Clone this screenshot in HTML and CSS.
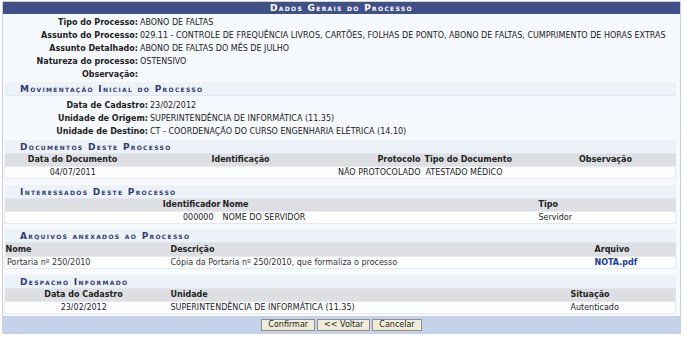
FILE: index.html
```html
<!DOCTYPE html>
<html lang="pt-BR">
<head>
  <meta charset="UTF-8">
  <title>Dados Gerais do Processo</title>
  <link rel="stylesheet" href="styles.css">
</head>
<body>
  <div class="painel">
    <div class="titulo">Dados Gerais do Processo</div>

    <table class="ficha ficha-geral">
      <tr><th>Tipo do Processo:</th><td>ABONO DE FALTAS</td></tr>
      <tr><th>Assunto do Processo:</th><td>029.11 - CONTROLE DE FREQUÊNCIA LIVROS, CARTÕES, FOLHAS DE PONTO, ABONO DE FALTAS, CUMPRIMENTO DE HORAS EXTRAS</td></tr>
      <tr><th>Assunto Detalhado:</th><td>ABONO DE FALTAS DO MÊS DE JULHO</td></tr>
      <tr><th>Natureza do processo:</th><td>OSTENSIVO</td></tr>
      <tr><th>Observação:</th><td></td></tr>
    </table>

    <div class="secao">Movimentação Inicial do Processo</div>
    <table class="ficha ficha-mov">
      <tr><th>Data de Cadastro:</th><td>23/02/2012</td></tr>
      <tr><th>Unidade de Origem:</th><td>SUPERINTENDÊNCIA DE INFORMÁTICA (11.35)</td></tr>
      <tr><th>Unidade de Destino:</th><td>CT - COORDENAÇÃO DO CURSO ENGENHARIA ELÉTRICA (14.10)</td></tr>
    </table>

    <div class="secao">Documentos Deste Processo</div>
    <table class="lista lista-docs">
      <colgroup>
        <col style="width:136px"><col style="width:188px"><col style="width:94px"><col style="width:113px"><col>
      </colgroup>
      <thead>
        <tr>
          <th class="centro">Data do Documento</th>
          <th class="centro">Identificação</th>
          <th class="direita">Protocolo</th>
          <th>Tipo do Documento</th>
          <th class="centro">Observação</th>
        </tr>
      </thead>
      <tbody>
        <tr>
          <td class="centro">04/07/2011</td>
          <td></td>
          <td class="direita">NÃO PROTOCOLADO</td>
          <td>ATESTADO MÉDICO</td>
          <td></td>
        </tr>
      </tbody>
    </table>

    <div class="secao">Interessados Deste Processo</div>
    <table class="lista lista-interessados">
      <colgroup>
        <col style="width:218px"><col style="width:314px"><col>
      </colgroup>
      <thead>
        <tr>
          <th class="direita">Identificador</th>
          <th>Nome</th>
          <th>Tipo</th>
        </tr>
      </thead>
      <tbody>
        <tr>
          <td class="direita recuo">000000</td>
          <td>NOME DO SERVIDOR</td>
          <td>Servidor</td>
        </tr>
      </tbody>
    </table>

    <div class="secao">Arquivos anexados ao Processo</div>
    <table class="lista lista-arquivos">
      <colgroup>
        <col style="width:164px"><col style="width:424px"><col>
      </colgroup>
      <thead>
        <tr>
          <th>Nome</th>
          <th>Descrição</th>
          <th>Arquivo</th>
        </tr>
      </thead>
      <tbody>
        <tr>
          <td>Portaria nº 250/2010</td>
          <td>Cópia da Portaria nº 250/2010, que formaliza o processo</td>
          <td><a href="#">NOTA.pdf</a></td>
        </tr>
      </tbody>
    </table>

    <div class="secao">Despacho Informado</div>
    <table class="lista lista-despacho">
      <colgroup>
        <col style="width:158px"><col style="width:404px"><col>
      </colgroup>
      <thead>
        <tr>
          <th class="centro">Data do Cadastro</th>
          <th>Unidade</th>
          <th>Situação</th>
        </tr>
      </thead>
      <tbody>
        <tr>
          <td class="centro">23/02/2012</td>
          <td>SUPERINTENDÊNCIA DE INFORMÁTICA (11.35)</td>
          <td>Autenticado</td>
        </tr>
      </tbody>
    </table>

    <div class="rodape">
      <button>Confirmar</button>
      <button>&lt;&lt; Voltar</button>
      <button>Cancelar</button>
    </div>
  </div>
</body>
</html>
```

FILE: styles.css
```css
:root {
  --azul-titulo: #415089;
  --azul-texto: #2f3b72;
  --fundo: #f6f9fe;
  --fundo-secao: #edf1f8;
  --cinza-cabecalho: #dedfe3;
  --rodape: #c6d1ea;
}
body {
  margin: 0;
  background: #fff;
  color: #222;
  font-family: "DejaVu Sans", Verdana, sans-serif;
  font-size: 8px;
}
.painel {
  width: 677px;
  margin: 1px 0 0 2px;
  border: 1px solid #c9d0de;
  background: var(--fundo);
}
.titulo {
  height: 12px;
  line-height: 12px;
  background: var(--azul-titulo);
  color: #fff;
  font-size: 9px;
  font-weight: bold;
  font-variant: small-caps;
  letter-spacing: 1.3px;
  text-align: center;
}
table {
  border-collapse: collapse;
  font-size: 8px;
}
.ficha {
  margin-top: 2px;
}
.ficha th {
  text-align: right;
  padding: 0 1px 0 0;
  line-height: 13px;
  height: 13px;
  white-space: nowrap;
}
.ficha td {
  padding: 0 0 0 1px;
  white-space: nowrap;
}
.ficha-geral th { width: 135px; }
.ficha-mov { margin-top: 3px; }
.ficha-mov th { width: 145px; }
.secao {
  margin: 1px 4px 0 2px;
  height: 14px;
  line-height: 14px;
  padding-left: 15px;
  background: var(--fundo-secao);
  color: var(--azul-texto);
  font-size: 9px;
  font-weight: bold;
  font-variant: small-caps;
  letter-spacing: 1.3px;
  border-bottom: 1px solid #e2e7f0;
  box-sizing: border-box;
}
.ficha-mov + .secao { margin-top: 2px; }
.lista + .secao { margin-top: 6px; }
.lista-interessados + .secao { margin-top: 5px; }
.lista {
  table-layout: fixed;
  width: 672px;
  margin-left: 1px;
}
.lista th {
  background: var(--cinza-cabecalho);
  line-height: 12px;
  height: 12px;
  padding: 0 2px;
  text-align: left;
  white-space: nowrap;
}
.lista td {
  background: #fdfeff;
  border-top: 1px solid #e6e9ef;
  border-bottom: 1px solid #e6e9ef;
  line-height: 11px;
  height: 11px;
  padding: 0 2px;
  white-space: nowrap;
}
.lista td:first-child { border-left: 1px solid #e6e9ef; }
.lista td:last-child { border-right: 1px solid #e6e9ef; }
.lista .centro { text-align: center; }
.lista .direita { text-align: right; }
.lista td.direita { padding-right: 2px; }
.lista td.recuo { padding-right: 9px; }
.lista-docs th:nth-child(2) { padding-left: 14px; }
.lista-docs td:nth-child(4) { padding-left: 3px; }
.lista-interessados th:nth-child(2),
.lista-interessados td:nth-child(2) { padding-left: 0; }
.lista-arquivos th {
  line-height: 13px;
  height: 13px;
}
.lista-arquivos th:first-child { padding-left: 1px; }
.lista-arquivos td { color: #333; }
.lista-arquivos a {
  color: #1a3a9c;
  font-weight: bold;
  text-decoration: none;
}
.lista-despacho th:nth-child(2),
.lista-despacho td:nth-child(2) { padding-left: 8px; }
.lista-despacho th:nth-child(3),
.lista-despacho td:nth-child(3) { padding-left: 4px; }
.rodape {
  margin-top: 2px;
  height: 17px;
  background: var(--rodape);
  display: flex;
  justify-content: center;
  align-items: center;
  gap: 2px;
}
.rodape button {
  height: 12px;
  padding: 0 6px;
  border: 1px solid #8f8f8f;
  border-radius: 0;
  background: #f1edd9;
  color: #222;
  font-family: "DejaVu Sans", Verdana, sans-serif;
  font-size: 8px;
  line-height: 10px;
  cursor: pointer;
}
```
